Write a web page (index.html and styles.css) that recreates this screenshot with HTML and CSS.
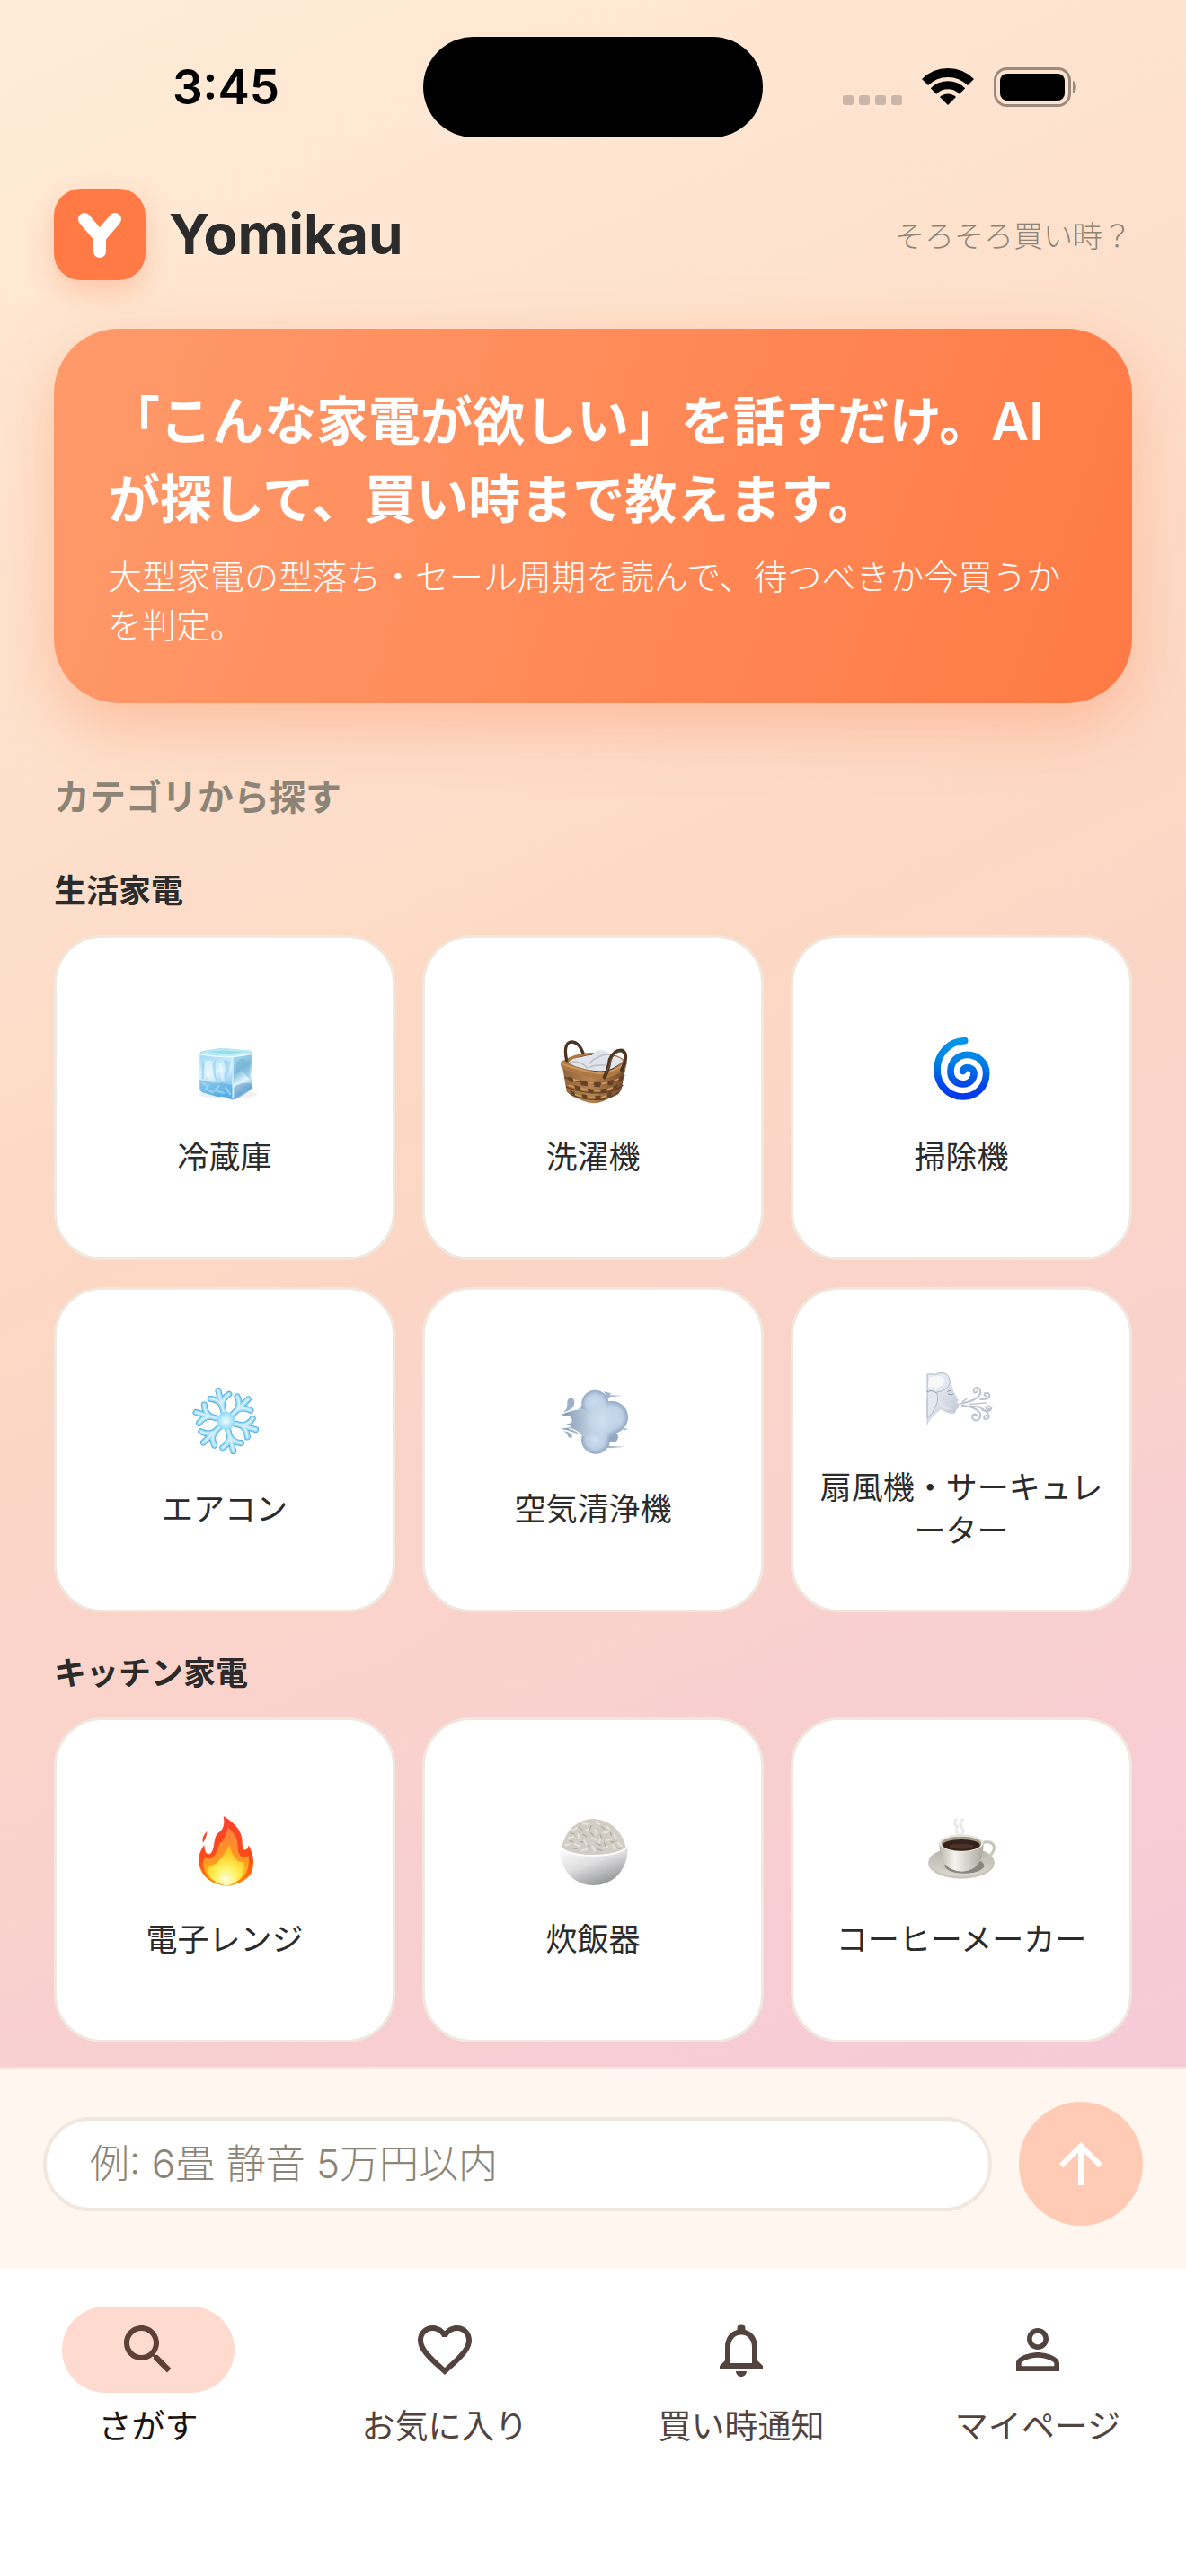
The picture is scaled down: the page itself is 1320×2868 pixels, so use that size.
FILE: index.html
```html
<!DOCTYPE html>
<html lang="ja">
  <head>
    <meta charset="UTF-8" />
    <meta name="viewport" content="width=device-width, initial-scale=1.0" />
    <title>Yomikau</title>
    <link rel="stylesheet" href="styles.css">
  </head>
  <body>
    <div class="status-bar">
      <span class="time">3:45</span>
      <span class="island"></span>
      <div class="status-icons">
        <svg width="66" height="42" viewBox="0 0 66 42" fill="#cbb5a6">
          <rect x="0" y="31" width="12" height="11" rx="3" />
          <rect x="18" y="31" width="12" height="11" rx="3" />
          <rect x="36" y="31" width="12" height="11" rx="3" />
          <rect x="54" y="31" width="12" height="11" rx="3" />
        </svg>
        <svg width="58" height="42" viewBox="0 0 58 42">
          <path d="M3.500 16.500A36 36 0 0 1 54.500 16.500" fill="none" stroke="#000" stroke-width="10" />
          <path d="M13 26.500A22.500 22.500 0 0 1 45 26.500" fill="none" stroke="#000" stroke-width="9" />
          <path d="M29 42L20 33A13 13 0 0 1 38 33Z" />
        </svg>
        <svg width="94" height="44" viewBox="0 0 94 44">
          <rect x="1.500" y="1.500" width="83" height="41" rx="13" fill="none" stroke="#9c897d" stroke-width="3" />
          <rect x="7" y="7" width="72" height="30" rx="8" />
          <path d="M88 15C93 17 93 27 88 29Z" fill="#9c897d" />
        </svg>
      </div>
    </div>

    <header>
      <svg class="logo" viewBox="0 0 102 102">
        <path d="M34 34L51 54L68 34M51 54V70" fill="none" stroke="#fff" stroke-width="14" stroke-linecap="round" stroke-linejoin="round" />
      </svg>
      <h1>Yomikau</h1>
      <p>そろそろ買い時？</p>
    </header>

    <main>
      <section class="hero">
        <h2>「こんな家電が欲しい」を話すだけ。AIが探して、買い時まで教えます。</h2>
        <p>大型家電の型落ち・セール周期を読んで、待つべきか今買うかを判定。</p>
      </section>

      <h2 class="category-title">カテゴリから探す</h2>

      <section class="group">
        <h3>生活家電</h3>
        <div class="cards">
          <a class="card" href="#fridge">
            <svg viewBox="0 -6 360 360">
              <defs>
                <linearGradient id="ice-left" x1="0" y1="0" x2="0.300" y2="1">
                  <stop offset="0" stop-color="#8fd0f0" />
                  <stop offset="0.500" stop-color="#d9f2fd" />
                  <stop offset="1" stop-color="#5db4ea" />
                </linearGradient>
                <linearGradient id="ice-right" x1="0" y1="0" x2="0.300" y2="1">
                  <stop offset="0" stop-color="#aadcf1" />
                  <stop offset="0.450" stop-color="#84bfde" />
                  <stop offset="0.700" stop-color="#e3f7ff" />
                  <stop offset="1" stop-color="#62a9dd" />
                </linearGradient>
              </defs>
              <ellipse cx="190" cy="254" rx="98" ry="13" fill="#eef0f5" />
              <path d="M97 118Q98 110 110 108L162 100Q180 98 260 106Q273 108 273 116L273 226Q273 234 264 240L219 268Q208 274 194 268Q176 258 160 262Q140 258 104 246Q96 242 96 232Z" fill="url(#ice-left)" />
              <path d="M206 125L272 115V230Q270 238 219 268Q212 272 205 270Z" fill="url(#ice-right)" />
              <path d="M98 115Q120 106 166 101Q220 99 270 112Q250 122 206 125Q140 124 98 115Z" fill="#b9ebf4" />
              <path d="M122 112Q160 105 190 107L246 111Q220 117 190 118Z" fill="#8ed4e6" opacity="0.700" />
              <path d="M99 120Q150 128 205 128L270 118" fill="none" stroke="#e5fbff" stroke-width="5" />
              <path d="M207 128V264" stroke="#d9f5ff" stroke-width="4" />
              <path d="M105 140Q114 150 110 178Q116 206 104 200ZM150 136Q146 180 154 208Q140 190 142 150ZM176 138Q188 170 178 202Q194 190 200 144Z" fill="#7cbfe9" opacity="0.450" />
              <path d="M114 142Q132 132 140 150Q134 190 150 206L126 206Q112 180 114 142ZM160 150L170 208L180 206Q172 170 172 146Z" fill="#fff" opacity="0.450" />
              <path d="M97 204Q120 212 130 212Q150 218 172 214L206 222V270Q180 256 160 262L104 246Q96 240 97 204Z" fill="#4d9fdc" opacity="0.450" />
              <path d="M108 216L124 224L118 236L140 246M160 226L148 240L176 248M184 232L198 252" fill="none" stroke="#9edbfa" stroke-width="8" stroke-linecap="round" opacity="0.700" />
              <path d="M220 146Q236 128 250 138Q246 154 262 134L266 202Q246 190 236 168Q228 182 218 186Z" fill="#6badce" opacity="0.450" />
              <path d="M210 230Q236 208 270 218V230L214 266Z" fill="#5794c0" opacity="0.500" />
            </svg>
            <span>冷蔵庫</span>
          </a>
          <a class="card" href="#washer">
            <svg viewBox="0 -6 360 360">
              <defs>
                <linearGradient id="wicker" x1="0" y1="0" x2="1" y2="0">
                  <stop offset="0" stop-color="#8f653b" />
                  <stop offset="0.450" stop-color="#b88450" />
                  <stop offset="1" stop-color="#71492a" />
                </linearGradient>
              </defs>
              <path d="M78 162L92 244Q104 260 150 276Q182 290 214 276L262 254Q276 244 278 220L290 160Z" fill="url(#wicker)" />
              <path d="M84 196Q150 222 214 218Q260 212 286 188M90 228Q150 252 212 248Q256 244 280 222M104 252Q150 276 212 270Q244 262 266 246" fill="none" stroke="#5f3e22" stroke-width="4" />
              <g fill="#634225">
                <path d="M96 194L112 198L114 214L100 210ZM138 206L160 209L162 226L140 223ZM184 212H206L204 229L184 228ZM230 208L248 204L246 221L230 224ZM268 196L282 188L278 204L266 210Z" />
                <path d="M118 222L136 228L138 243L122 238ZM162 234L182 236L182 251L164 249ZM206 236L226 233L224 248L206 250ZM248 226L264 218L260 234L246 240Z" />
                <path d="M102 240L118 246L122 258L106 250ZM142 252L160 256L160 270L146 266ZM188 258L206 257L204 272L188 274ZM228 250L244 244L240 258L228 264Z" />
              </g>
              <g stroke="#d19a61" stroke-width="5" stroke-linecap="round">
                <path d="M116 204L134 208M164 216H180M210 218L226 215M252 208L264 202M100 224L114 228M142 234L158 237M188 240H202M230 236L244 231M122 254L138 260M164 264H184M210 264L224 258" />
              </g>
              <path d="M72 146Q88 134 120 122Q180 104 256 122Q290 136 294 150L286 172Q250 196 210 202Q150 196 78 168Q70 158 72 146Z" fill="#ad7844" />
              <path d="M92 148Q130 122 190 120Q250 122 280 142Q250 176 212 182Q150 170 92 148Z" fill="#3d2a1c" />
              <path d="M96 148Q108 132 142 128Q162 122 176 122Q188 104 212 105Q234 110 240 124Q270 128 280 142Q256 166 224 174Q196 178 160 170Q120 162 96 148Z" fill="#e1e4ea" />
              <path d="M104 148Q132 136 160 164M170 150Q180 134 194 132Q208 120 236 120M166 164Q180 154 222 156" fill="none" stroke="#bcc1cb" stroke-width="5" stroke-linecap="round" />
              <path d="M78 152Q140 176 206 184Q252 176 286 152" fill="none" stroke="#cb9861" stroke-width="6" />
              <path d="M92 140Q80 84 106 78Q132 76 147 116" fill="none" stroke="#493524" stroke-width="10" stroke-linecap="round" />
              <path d="M218 196Q232 170 236 138Q250 104 278 107Q300 120 276 172" fill="none" stroke="#493524" stroke-width="12" stroke-linecap="round" />
              <path d="M222 184Q236 160 240 138Q252 112 270 110" fill="none" stroke="#755a41" stroke-width="3" />
            </svg>
            <span>洗濯機</span>
          </a>
          <a class="card" href="#cleaner">
            <svg viewBox="450 306 360 360">
              <defs>
                <linearGradient id="swirl" gradientUnits="userSpaceOnUse" x1="0" y1="380" x2="0" y2="580">
                  <stop offset="0" stop-color="#0097ea" />
                  <stop offset="0.400" stop-color="#007ee4" />
                  <stop offset="0.800" stop-color="#0043e6" />
                  <stop offset="1" stop-color="#0038ea" />
                </linearGradient>
              </defs>
              <path d="M641 386C590 388 549 430 549 482C549 532 586 573 635 573C681 573 713 538 713 494C713 458 684 433 650 433C616 433 594 458 594 488C594 514 612 531 636 531C658 531 672 514 672 496C672 484 662 476 650 476C642 476 636 480 635 487" fill="none" stroke="url(#swirl)" stroke-width="23" stroke-linecap="round" />
            </svg>
            <span>掃除機</span>
          </a>
          <a class="card" href="#aircon">
            <svg viewBox="-30 -18 360 360">
              <defs>
                <g id="flake-arm" fill="none" stroke-linecap="round" stroke-linejoin="round">
                  <path d="M0 0V-104M0 -52Q-6 -76 -32 -84M0 -52Q6 -76 32 -84" />
                </g>
                <g id="flake">
                  <use href="#flake-arm" />
                  <use href="#flake-arm" transform="rotate(60)" />
                  <use href="#flake-arm" transform="rotate(120)" />
                  <use href="#flake-arm" transform="rotate(180)" />
                  <use href="#flake-arm" transform="rotate(240)" />
                  <use href="#flake-arm" transform="rotate(300)" />
                </g>
                <radialGradient id="flake-core">
                  <stop offset="0" stop-color="#f1fcff" />
                  <stop offset="1" stop-color="#8fdaf9" />
                </radialGradient>
              </defs>
              <g transform="translate(154 156) rotate(-14)">
                <use href="#flake" stroke="#4fa9e0" stroke-width="21" />
                <use href="#flake" stroke="#92dbf9" stroke-width="16" />
                <use href="#flake" stroke="#d3effb" stroke-width="7" />
                <circle r="30" fill="url(#flake-core)" />
              </g>
            </svg>
            <span>エアコン</span>
          </a>
          <a class="card" href="#purifier">
            <svg viewBox="-30 -18 360 360">
              <defs>
                <radialGradient id="puff" cx="0.500" cy="0.500" r="0.560">
                  <stop offset="0" stop-color="#d0e1f2" />
                  <stop offset="0.600" stop-color="#bccfe4" />
                  <stop offset="1" stop-color="#8399b7" />
                </radialGradient>
                <radialGradient id="puff-light">
                  <stop offset="0" stop-color="#cfe0f1" />
                  <stop offset="0.600" stop-color="#c4d6e9" />
                  <stop offset="1" stop-color="#bccfe4" stop-opacity="0" />
                </radialGradient>
                <linearGradient id="streak" x1="0" y1="0" x2="1" y2="0">
                  <stop offset="0" stop-color="#8095b0" />
                  <stop offset="0.600" stop-color="#bccde1" />
                  <stop offset="1" stop-color="#cadaeb" />
                </linearGradient>
              </defs>
              <path d="M186 58L210 63L206 70L250 72L206 76L200 84ZM250 180L268 182L254 188ZM200 232L206 240L258 242L206 247L194 244Z" fill="#a5b6cb" />
              <circle cx="216" cy="210" r="18" fill="#91a8c4" />
              <circle cx="213" cy="144" r="54" fill="url(#puff)" />
              <circle cx="157" cy="98" r="45" fill="url(#puff)" />
              <circle cx="159" cy="218" r="48" fill="url(#puff)" />
              <path d="M42 136Q80 118 118 117Q160 110 186 130Q210 156 186 186Q160 204 116 208Q80 188 42 182L78 177Q72 168 58 168L78 162Q84 150 72 140Z" fill="url(#streak)" />
              <ellipse cx="180" cy="152" rx="58" ry="70" fill="url(#puff-light)" />
              <path d="M46 127Q64 122 64 102Q62 80 78 78Q92 84 86 104Q76 124 46 127ZM50 190Q66 190 76 198Q84 206 78 213Q70 215 66 206Q64 196 50 190ZM100 118Q110 112 112 102L116 116Z" fill="#9eb1c9" />
              <path d="M70 182Q100 186 112 208" fill="none" stroke="#fff" stroke-width="4" />
            </svg>
            <span>空気清浄機</span>
          </a>
          <a class="card" href="#fan">
            <svg viewBox="-18 -18 360 360">
              <defs>
                <linearGradient id="face" x1="0" y1="0" x2="1" y2="1">
                  <stop offset="0" stop-color="#f4f5f9" />
                  <stop offset="1" stop-color="#b9c0cf" />
                </linearGradient>
              </defs>
              <path d="M80 104L124 98Q136 116 136 130L153 160L146 166L158 172L152 178L154 184L146 190Q144 204 132 204Q110 202 94 190Q66 210 48 240V150Z" fill="url(#face)" />
              <path d="M88 140Q96 178 134 190Q110 192 90 182Q78 164 80 140Z" fill="#dde2ec" />
              <path d="M48 72Q62 70 76 73Q94 62 112 72Q128 86 122 106Q112 128 80 132Q88 160 74 182Q70 202 48 218Z" fill="#e4e8f0" stroke="#aeb8c8" stroke-width="3" />
              <path d="M56 82Q90 70 106 88Q106 112 76 120Q62 114 50 116Z" fill="#f7f8fb" />
              <path d="M118 138Q128 146 136 138M116 130L128 126M48 130Q66 124 78 134" fill="none" stroke="#8e99ad" stroke-width="3" stroke-linecap="round" />
              <path d="M48 240V150" stroke="#b8bfcc" stroke-width="2" />
              <g fill="none" stroke="#bcc4d0" stroke-width="6" stroke-linecap="round">
                <path d="M162 170Q222 158 226 132Q226 116 210 118Q200 122 204 132Q212 136 216 128" />
                <path d="M164 176Q222 184 226 208Q224 228 208 226Q194 220 200 208Q210 202 216 212" />
                <path d="M226 156Q256 158 256 142Q252 130 240 136Q236 144 246 146" />
                <path d="M220 182Q254 196 254 214Q248 228 238 220Q236 210 246 210" />
                <path d="M232 192Q262 200 262 184Q254 174 244 182Q244 190 254 188" />
                <path d="M166 164L180 154M190 172L244 168M188 178L220 180" stroke-width="4" />
              </g>
            </svg>
            <span>扇風機・サーキュレーター</span>
          </a>
        </div>
      </section>

      <section class="group">
        <h3>キッチン家電</h3>
        <div class="cards">
          <a class="card" href="#microwave">
            <svg viewBox="0 0 360 360">
              <defs>
                <linearGradient id="flame" x1="0" y1="0" x2="0" y2="1">
                  <stop offset="0" stop-color="#f9412c" />
                  <stop offset="0.600" stop-color="#ff4a18" />
                  <stop offset="1" stop-color="#ff8900" />
                </linearGradient>
                <linearGradient id="flame-mid" x1="0" y1="0" x2="0" y2="1">
                  <stop offset="0" stop-color="#ff7d3a" />
                  <stop offset="0.600" stop-color="#ff9b20" />
                  <stop offset="1" stop-color="#ffd51c" />
                </linearGradient>
                <radialGradient id="flame-core" cx="0.500" cy="0.850" r="0.700">
                  <stop offset="0" stop-color="#fffde0" />
                  <stop offset="0.450" stop-color="#fff15c" />
                  <stop offset="1" stop-color="#ffc21c" />
                </radialGradient>
              </defs>
              <path d="M176 57Q232 90 238 132Q240 156 240 168Q258 174 260 154Q280 190 275 222Q274 276 188 291Q106 282 94 214Q90 184 112 152Q112 184 130 184Q142 178 146 142Q150 118 160 112Q184 96 176 57ZM122 108Q118 132 108 146Q102 124 122 108Z" fill="url(#flame)" />
              <path d="M190 94Q224 118 224 158Q222 184 240 194Q256 194 260 188Q270 268 188 288Q112 276 108 212Q112 200 114 196Q134 206 148 186Q158 172 162 150Q186 132 190 94Z" fill="url(#flame-mid)" />
              <path d="M196 152Q204 188 224 206Q240 214 246 208Q252 272 188 290Q128 280 122 228Q150 222 170 196Q186 176 196 152Z" fill="url(#flame-core)" />
            </svg>
            <span>電子レンジ</span>
          </a>
          <a class="card" href="#rice-cooker">
            <svg viewBox="0 0 360 360">
              <defs>
                <linearGradient id="bowl" x1="0.200" y1="0" x2="0.800" y2="1">
                  <stop offset="0" stop-color="#fdfdfd" />
                  <stop offset="0.450" stop-color="#dededf" />
                  <stop offset="1" stop-color="#88898c" />
                </linearGradient>
              </defs>
              <path d="M74 164Q84 124 108 96Q142 66 182 66Q232 70 260 102Q284 130 290 164Q240 188 180 188Q110 184 74 164Z" fill="#d1cdc4" />
              <g fill="none" stroke-linecap="round" stroke-width="6">
                <path d="M112 104L126 96M148 82L164 84M188 76L202 84M224 90L234 100M98 130L114 126M130 116L134 132M156 104L170 98M186 102L192 116M214 112L230 110M250 118L258 132M88 154L102 150M118 150L134 156M150 136L158 152M176 130L192 136M206 132L200 148M226 138L242 134M264 146L274 156M142 172L160 168M178 158L186 174M214 164L230 158M246 154L252 166" stroke="#e6e3db" />
                <path d="M134 94L144 104M174 90L168 104M208 92L218 100M238 112L242 122M118 116L106 114M146 118L158 124M174 114L180 122M204 118L208 130M240 144L254 142M102 140L114 142M136 142L146 144M164 154L168 164M192 148L206 154M218 146L222 158M110 164L126 166M196 168L210 172M260 162L270 166" stroke="#b0aba1" stroke-width="4" />
              </g>
              <path d="M70 154Q76 172 120 182Q180 192 242 182Q286 172 294 154Q298 162 296 174Q292 228 256 262Q222 288 182 288Q140 288 108 262Q72 228 69 172Q68 162 70 154Z" fill="url(#bowl)" />
              <path d="M71 158Q82 178 132 186Q182 192 240 184Q284 176 294 158" fill="none" stroke="#fff" stroke-width="5" />
            </svg>
            <span>炊飯器</span>
          </a>
          <a class="card" href="#coffee-maker">
            <svg viewBox="0 0 360 360">
              <defs>
                <linearGradient id="cup" x1="0" y1="0" x2="1" y2="0">
                  <stop offset="0" stop-color="#b8b5aa" />
                  <stop offset="0.350" stop-color="#f5f4ee" />
                  <stop offset="1" stop-color="#aaa79d" />
                </linearGradient>
                <linearGradient id="saucer" x1="0" y1="0" x2="0" y2="1">
                  <stop offset="0" stop-color="#b5b2a8" />
                  <stop offset="1" stop-color="#d9d7cf" />
                </linearGradient>
              </defs>
              <ellipse cx="180" cy="214" rx="111" ry="52" fill="#c9c6bd" />
              <ellipse cx="180" cy="209" rx="109" ry="48" fill="url(#saucer)" />
              <ellipse cx="190" cy="222" rx="66" ry="26" fill="#88857c" />
              <path d="M244 154Q252 140 274 144Q300 154 282 182Q262 204 238 204" fill="none" stroke="#c7c4bb" stroke-width="9" />
              <path d="M106 148Q106 240 182 242Q254 240 254 148Z" fill="url(#cup)" />
              <ellipse cx="180" cy="147" rx="74" ry="29" fill="#e9e7df" />
              <ellipse cx="180" cy="149" rx="67" ry="24" fill="#a39a8a" />
              <ellipse cx="180" cy="154" rx="62" ry="19" fill="#35221b" />
              <ellipse cx="180" cy="158" rx="40" ry="9" fill="#4e3228" />
              <path d="M170 122Q160 104 166 92Q152 84 162 68M182 120Q190 104 180 92Q172 80 184 68" fill="none" stroke="#e2e2e2" stroke-width="10" stroke-linecap="round" opacity="0.700" />
            </svg>
            <span>コーヒーメーカー</span>
          </a>
        </div>
      </section>
    </main>

    <form class="composer">
      <input type="text" placeholder="例: 6畳 静音 5万円以内" aria-label="条件" />
      <button type="submit" aria-label="送信">
        <svg viewBox="0 0 24 24"><path d="M4 12l1.410 1.410L11 7.830V20h2V7.830l5.580 5.590L20 12l-8-8-8 8z" /></svg>
      </button>
    </form>

    <nav>
      <a class="active" href="#search">
        <span class="nav-icon">
          <svg viewBox="0 0 24 24"><path d="M15.500 14h-.79l-.28-.27C15.410 12.590 16 11.110 16 9.500 16 5.910 13.090 3 9.500 3S3 5.910 3 9.500 5.910 16 9.500 16c1.610 0 3.090-.59 4.230-1.570l.27.28v.79l5 4.990L20.490 19l-4.990-5zm-6 0C7.010 14 5 11.990 5 9.500S7.010 5 9.500 5 14 7.010 14 9.500 11.990 14 9.500 14z" /></svg>
        </span>
        さがす
      </a>
      <a href="#favorites">
        <span class="nav-icon">
          <svg viewBox="0 0 24 24"><path d="M16.500 3c-1.740 0-3.410.81-4.500 2.090C10.910 3.810 9.240 3 7.500 3 4.420 3 2 5.420 2 8.500c0 3.780 3.400 6.860 8.550 11.540L12 21.350l1.450-1.320C18.600 15.360 22 12.280 22 8.500 22 5.420 19.580 3 16.500 3zm-4.400 15.550l-.1.1-.1-.1C7.140 14.240 4 11.390 4 8.500 4 6.500 5.500 5 7.500 5c1.540 0 3.040.99 3.570 2.360h1.870C13.460 5.990 14.960 5 16.500 5c2 0 3.500 1.500 3.500 3.500 0 2.890-3.140 5.740-7.900 10.050z" /></svg>
        </span>
        お気に入り
      </a>
      <a href="#alerts">
        <span class="nav-icon">
          <svg viewBox="0 0 24 24"><path d="M12 22c1.100 0 2-.9 2-2h-4c0 1.100.9 2 2 2zm6-6v-5c0-3.070-1.630-5.640-4.500-6.320V4c0-.83-.67-1.500-1.500-1.500s-1.500.67-1.500 1.500v.68C7.640 5.360 6 7.920 6 11v5l-2 2v1h16v-1l-2-2zm-2 1H8v-6c0-2.480 1.510-4.500 4-4.500s4 2.020 4 4.500v6z" /></svg>
        </span>
        買い時通知
      </a>
      <a href="#mypage">
        <span class="nav-icon">
          <svg viewBox="0 0 24 24"><path d="M12 5.900c1.160 0 2.100.94 2.100 2.100s-.94 2.100-2.100 2.100S9.900 9.160 9.900 8s.94-2.100 2.100-2.100m0 9c2.970 0 6.100 1.460 6.100 2.100v1.100H5.900V17c0-.64 3.130-2.100 6.100-2.100M12 4C9.790 4 8 5.790 8 8s1.790 4 4 4 4-1.790 4-4-1.790-4-4-4zm0 9c-2.670 0-8 1.340-8 4v3h16v-3c0-2.660-5.330-4-8-4z" /></svg>
        </span>
        マイページ
      </a>
    </nav>
  </body>
</html>
```
FILE: styles.css
```css
* {
  box-sizing: border-box;
}

body {
  display: flex;
  flex-direction: column;
  min-height: 100vh;
  margin: 0;
  font-family: Inter, "Noto Sans CJK JP", sans-serif;
  color: #2b2b2b;
  background: linear-gradient(155deg, #ffecd8 0%, #fcd8c4 42%, #f6c9d9 86%);
}

h1,
h2,
h3,
p {
  margin: 0;
}

a {
  color: inherit;
  text-decoration: none;
}

.status-bar {
  display: grid;
  grid-template-columns: 1fr 378px 1fr;
  align-items: center;
  justify-items: center;
  height: 194px;
}

.time {
  padding-left: 32px;
  font-size: 53px;
  font-weight: 600;
  color: black;
}

.island {
  width: 100%;
  height: 112px;
  border-radius: 56px;
  background-color: black;
}

.status-icons {
  display: flex;
  gap: 22px;
  padding-right: 32px;
}

header {
  display: flex;
  align-items: center;
  padding: 16px 60px 54px;
}

.logo {
  width: 102px;
  height: 102px;
  margin-right: 26px;
  border-radius: 30px;
  background-color: #ff7a45;
  box-shadow: 0 12px 30px rgba(255, 122, 69, 0.3);
}

header h1 {
  font-size: 62px;
  font-weight: 700;
  line-height: 72px;
}

header p {
  margin-left: auto;
  font-family: "Noto Sans CJK JP", sans-serif;
  font-size: 33px;
  font-weight: 300;
  line-height: 48px;
  color: #8c8577;
}

main {
  flex: 1;
  padding: 0 60px 27px;
}

.hero {
  padding: 60px;
  border-radius: 72px;
  color: white;
  background: linear-gradient(109deg, #ff9a6b, #ff7a45);
  box-shadow: 0 24px 72px rgba(255, 122, 69, 0.35);
}

.hero h2 {
  margin-bottom: 15px;
  font-size: 58px;
  font-weight: 600;
  line-height: 87px;
}

.hero p {
  font-size: 38px;
  font-weight: 300;
  line-height: 54px;
}

.category-title {
  margin-top: 75px;
  margin-bottom: 6px;
  font-size: 40px;
  font-weight: 600;
  line-height: 60px;
  color: #8c8577;
}

.group {
  padding-top: 41px;
}

.group h3 {
  margin-bottom: 22px;
  font-size: 36px;
  font-weight: 600;
  line-height: 54px;
}

.cards {
  display: grid;
  grid-template-columns: repeat(3, 1fr);
  gap: 30px;
}

.card {
  display: flex;
  flex-direction: column;
  align-items: center;
  justify-content: center;
  gap: 12px;
  height: 362px;
  padding: 0 24px;
  border: 3px solid #f0e8df;
  border-radius: 54px;
  background-color: white;
  font-size: 35px;
  font-weight: 400;
  line-height: 48px;
  text-align: center;
  line-break: anywhere;
}

.card svg {
  width: 120px;
  height: 120px;
}

.composer {
  display: flex;
  align-items: center;
  gap: 30px;
  padding: 36px 48px 48px;
  border-top: 3px solid #f0e8df;
  background-color: #fff7ef;
}

.composer input {
  flex: 1;
  min-width: 0;
  height: 105px;
  padding: 0 48px;
  border: 4px solid #f0e8df;
  border-radius: 54px;
  background-color: white;
  font-family: inherit;
  font-size: 44px;
  font-weight: 300;
}

.composer input::placeholder {
  color: #8c8577;
}

.composer button {
  display: flex;
  align-items: center;
  justify-content: center;
  width: 138px;
  height: 138px;
  padding: 0;
  border: none;
  border-radius: 50%;
  background-color: #ffcbb5;
  cursor: pointer;
}

.composer svg {
  width: 72px;
  fill: white;
}

nav {
  display: grid;
  grid-template-columns: repeat(4, 1fr);
  padding: 42px 0 142px;
  background-color: white;
}

nav a {
  display: flex;
  flex-direction: column;
  align-items: center;
  gap: 14px;
  font-size: 37px;
  line-height: 48px;
  color: #53433f;
}

.nav-icon {
  display: flex;
  align-items: center;
  justify-content: center;
  width: 192px;
  height: 96px;
  border-radius: 48px;
}

.nav-icon svg {
  width: 72px;
  fill: #53433f;
}

nav .active {
  color: #1c1412;
}

.active .nav-icon {
  background-color: #ffdacf;
}

.active svg {
  fill: #5d4036;
}
```
